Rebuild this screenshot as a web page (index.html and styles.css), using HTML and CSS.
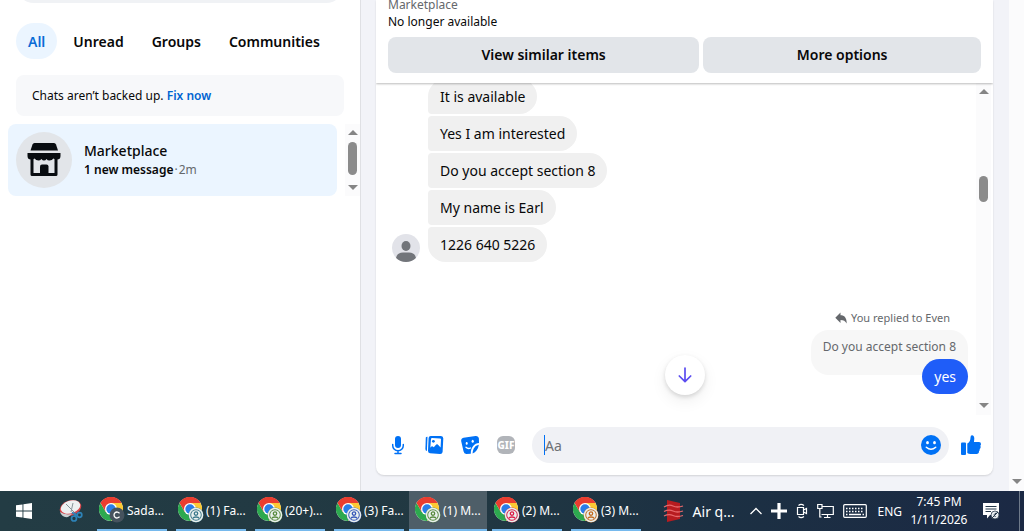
FILE: index.html
```
<!DOCTYPE html>
<html lang="en">
<head>
<meta charset="utf-8">
<title>Messenger</title>
<link rel="stylesheet" href="styles.css">
</head>
<body>
<svg class="defs" aria-hidden="true">
  <defs>
    <symbol id="chrome" viewBox="0 0 24 24">
      <circle cx="12" cy="12" r="12" fill="#fff"/>
      <path d="M12 12 1.6 6A12 12 0 0 1 22.4 6Z" fill="#ea3d2f"/>
      <path d="M12 6H22.4A12 12 0 0 1 12 24L17.2 15Z" fill="#fcc934"/>
      <path d="M6.8 15 1.6 6A12 12 0 0 0 12 24L17.2 15Z" fill="#2da94f"/>
      <path d="M1.6 6 6.8 15 9 8 12 6H22.4A12 12 0 0 0 1.6 6Z" fill="#ea3d2f"/>
      <circle cx="12" cy="12" r="6" fill="#fff"/>
      <circle cx="12" cy="12" r="4.7" fill="#2a7de8"/>
    </symbol>
    <symbol id="person" viewBox="0 0 16 16">
      <circle cx="8" cy="8" r="7.500" fill="currentColor"/>
      <circle cx="8" cy="8" r="6.500" fill="none" stroke="#e9f0ee" stroke-width="1.500"/>
      <circle cx="8" cy="8" r="4.800" fill="#e9f0ee"/>
      <circle cx="8" cy="6.600" r="1.700" fill="none" stroke="currentColor" stroke-width="1.300"/>
      <path d="M4.800 11.500C5.500 9.500 10.500 9.500 11.200 11.500" fill="none" stroke="currentColor" stroke-width="1.300"/>
    </symbol>
    <symbol id="up" viewBox="0 0 10 5"><path d="M5 0 10 5H0Z" fill="#858585"/></symbol>
    <symbol id="down" viewBox="0 0 10 5"><path d="M0 0H10L5 5Z" fill="#858585"/></symbol>
  </defs>
</svg>

<div class="app">
  <aside class="sidebar">
    <input class="search" type="text" aria-label="Search Messenger">
    <nav class="tabs">
      <button class="tab tab-active" type="button">All</button>
      <button class="tab" type="button">Unread</button>
      <button class="tab" type="button">Groups</button>
      <button class="tab" type="button">Communities</button>
    </nav>
    <p class="backup">Chats aren’t backed up. <a href="#">Fix now</a></p>
    <div class="threads">
      <a class="thread" href="#">
        <span class="shop">
          <svg width="36" height="36" viewBox="0 0 36 36">
            <path d="M6.500 2.500Q7 1 8.500 1H28Q29.500 1 30 2.500L32 8.500H4.500Z" fill="#080c10"/>
            <path d="M1.500 11H34.500V14Q34.500 17.500 31 17.500Q28.500 17.500 27.500 16.500Q26 18.500 23.500 18.500Q21.500 18.500 20.500 17Q19.500 18.500 18 18.500Q16.500 18.500 15.500 17Q14 18.500 12.500 18.500Q10 18.500 8.500 16.500Q7.500 17.500 5 17.500Q1.500 17.500 1.500 14Z" fill="#080c10"/>
            <path d="M6 16V32.500H30V16" fill="none" stroke="#080c10" stroke-width="3" stroke-linejoin="round"/>
            <path d="M14 33V24.500Q14 22.500 16 22.500H20.500Q22.500 22.500 22.500 24.500V33Z" fill="#080c10"/>
          </svg>
        </span>
        <span class="thread-text">
          <span class="thread-title">Marketplace</span>
          <span class="thread-sub"><b>1 new message</b><span class="muted"><span class="dot">·</span>2m</span></span>
        </span>
      </a>
      <div class="scroll scroll-threads">
        <svg width="10" height="5"><use href="#up"/></svg>
        <span class="thumb"></span>
        <svg width="10" height="5"><use href="#down"/></svg>
      </div>
    </div>
  </aside>

  <main class="main">
    <section class="chat">
      <header class="listing">
        <div class="listing-name">Marketplace</div>
        <div class="listing-state">No longer available</div>
        <div class="actions">
          <button class="action" type="button">View similar items</button>
          <button class="action" type="button">More options</button>
        </div>
      </header>

      <div class="conversation">
        <div class="messages">
          <div class="incoming">
            <svg class="avatar" width="28" height="28" viewBox="0 0 28 28">
              <defs><clipPath id="round"><circle cx="14" cy="14" r="14"/></clipPath></defs>
              <g clip-path="url(#round)">
                <rect width="28" height="28" fill="#e2e3e9"/>
                <ellipse cx="14" cy="12" rx="4.500" ry="5" fill="#72757a"/>
                <path d="M4 28V24Q5 18.500 11 18.500H17Q23 18.500 24 24V28Z" fill="#72757a"/>
              </g>
            </svg>
            <div class="bubbles">
              <div class="bubble bubble-first">It is available</div>
              <div class="bubble">Yes I am interested</div>
              <div class="bubble">Do you accept section 8</div>
              <div class="bubble">My name is Earl</div>
              <div class="bubble bubble-last">1226 640 5226</div>
            </div>
          </div>
          <div class="outgoing">
            <div class="reply-note">
              <svg width="12" height="12" viewBox="0 0 12 12"><path d="M5.500 .5V3.200C9.500 3.200 11.700 5.800 11.700 11.500C10.300 9 8.600 8 5.500 8V11L.3 5.700Z" fill="#65686c"/></svg>
              You replied to Even
            </div>
            <div class="quote">Do you accept section 8</div>
            <div class="sent">yes</div>
          </div>
        </div>
        <div class="scroll scroll-chat">
          <svg width="10" height="5"><use href="#up"/></svg>
          <span class="thumb"></span>
          <svg width="10" height="5"><use href="#down"/></svg>
        </div>
        <button class="jump" type="button" aria-label="Scroll to bottom">
          <svg width="14" height="16" viewBox="0 0 14 16"><path d="M7 1V14.500M1.300 9 7 14.700 12.700 9" fill="none" stroke="#5b4cf0" stroke-width="1.700" stroke-linecap="round" stroke-linejoin="round"/></svg>
        </button>
      </div>

      <form class="composer">
        <button class="tool" type="button" aria-label="Voice clip">
          <svg width="20" height="20" viewBox="0 0 20 20"><rect x="7" y="1" width="6" height="12" rx="3" fill="#0071f5"/><path d="M4.700 9.500V10.500A5.300 5.300 0 0 0 15.300 10.500V9.500M10 16V18.300M7 18.500H13" fill="none" stroke="#0071f5" stroke-width="1.500" stroke-linecap="round"/></svg>
        </button>
        <button class="tool" type="button" aria-label="Photo">
          <svg width="20" height="20" viewBox="0 0 20 20"><path d="M1.800 2.500Q2.200 1.600 3.500 1.700L2.900 16Q1.500 15.800 1.400 14Z" fill="#0071f5"/><path d="M6.700 1H17Q19.400 1.200 19.300 3.500L18.600 17Q18.300 19.200 16 19.100L6 18.200Q3.900 17.900 4 15.800L4.600 3Q4.800 1 6.700 1Z" fill="#0071f5"/><path d="M7 4Q7.100 3 8 3L16 3.400Q17.100 3.500 17 4.500L16.600 12.500 13.800 9.500Q13 8.800 12.200 9.600L9.800 12.300 8.700 11.400Q8 11 7.400 11.600L6.300 12.700Z" fill="#fff"/><circle cx="9.400" cy="6.300" r="1.400" fill="#0071f5"/></svg>
        </button>
        <button class="tool" type="button" aria-label="Sticker">
          <svg width="20" height="20" viewBox="0 0 20 20"><path d="M3.500 2.700 15.500 1Q18.500 .8 18.900 3.600L19 8C14.500 8.400 10.800 11.800 10.800 18.700L6.300 19Q4 18.800 3.500 16.300L1.200 6.300Q.8 3.400 3.500 2.700Z" fill="#0071f5"/><path d="M18.800 9.800C18 14.500 16 17.200 12.600 18.400C12.800 13.800 15 10.600 18.800 9.800Z" fill="#0071f5"/><ellipse cx="6.700" cy="8.400" rx="1" ry="1.400" fill="#fff"/><ellipse cx="12.700" cy="6.300" rx="1.100" ry="1.500" fill="#fff"/><path d="M6 12.300Q8 14.300 10.500 13" stroke="#fff" stroke-width="1.400" fill="none" stroke-linecap="round"/></svg>
        </button>
        <button class="tool" type="button" aria-label="GIF"><span class="gif">GIF</span></button>
        <div class="field">
          <input class="entry" type="text" placeholder="Aa" aria-label="Message">
          <button class="tool" type="button" aria-label="Emoji">
            <svg width="20" height="20" viewBox="0 0 20 20"><circle cx="10" cy="10" r="10" fill="#0071f5"/><ellipse cx="6.500" cy="7.700" rx="1.400" ry="1.600" fill="#fff"/><ellipse cx="13.500" cy="7.700" rx="1.400" ry="1.600" fill="#fff"/><path d="M5.300 12.300Q10 16.300 14.700 12.300" stroke="#fff" stroke-width="1.500" fill="none" stroke-linecap="round"/></svg>
          </button>
        </div>
        <button class="tool" type="button" aria-label="Like">
          <svg width="20" height="20" viewBox="0 0 20 20"><rect x="0" y="7.500" width="5" height="12.500" rx="1" fill="#0071f5"/><path d="M6.300 8.600C8.700 7.200 9.500 5 9.500 2.500Q9.500 .2 11 .2Q13.300 .5 13.300 3.500L13 7H18Q20 7.100 20 9Q20 10.200 19.300 10.700Q20 11.700 19.500 12.900 19.200 13.600 18.700 13.900 19 15.200 18 16.200 18 18.900 15.500 19H9.500Q7.500 18.900 6.300 18Z" fill="#0071f5"/></svg>
        </button>
      </form>
    </section>
  </main>
  <div class="scroll scroll-page">
    <svg width="10" height="5"><use href="#down"/></svg>
  </div>
</div>

<footer class="taskbar">
  <button class="start" type="button" aria-label="Start">
    <svg width="16" height="16" viewBox="0 0 16 16" fill="#fff"><path d="M0 2.300 6.500 1.400V7.500H0ZM7.400 1.200 16 0V7.500H7.400ZM0 8.400H6.500V14.600L0 13.700ZM7.400 8.400H16V16L7.400 14.800Z"/></svg>
  </button>
  <button class="snip" type="button" aria-label="Snipping Tool">
    <svg width="24" height="24" viewBox="0 0 24 24"><ellipse cx="11.500" cy="9" rx="11" ry="7.500" transform="rotate(-18 11.500 9)" fill="#d8454a"/><ellipse cx="11.500" cy="8" rx="10" ry="6.300" transform="rotate(-18 11.500 8)" fill="#eef0f1"/><path d="M1 13Q3 19 9 18L13 15Q6 16.500 1 13Z" fill="#c9d0d3"/><path d="M7 5 15 13M14 4 12 13" stroke="#889399" fill="none"/><circle cx="15" cy="19.500" r="2.500" fill="none" stroke="#2d83b8" stroke-width="1.700"/><circle cx="20.500" cy="16" r="2.300" fill="none" stroke="#2d83b8" stroke-width="1.700"/><path d="M13 13.500 18 16.500M16 13.500V17.500" stroke="#2d83b8" stroke-width="1.500"/></svg>
  </button>
  <div class="tasks">
    <button class="task" type="button"><svg width="26" height="26" viewBox="0 0 26 26"><use href="#chrome" width="24" height="24"/><circle cx="18" cy="18" r="7.500" fill="#46535e"/><path d="M20.500 16.300A3 3 0 1 0 20.500 19.700" fill="none" stroke="#fff" stroke-width="1.300"/></svg>Sada...</button>
    <button class="task teal" type="button"><svg width="26" height="26" viewBox="0 0 26 26"><use href="#chrome" width="24" height="24"/><use href="#person" x="10" y="10" width="16" height="16"/></svg>(1) Fa...</button>
    <button class="task green" type="button"><svg width="26" height="26" viewBox="0 0 26 26"><use href="#chrome" width="24" height="24"/><use href="#person" x="10" y="10" width="16" height="16"/></svg>(20+)...</button>
    <button class="task blue" type="button"><svg width="26" height="26" viewBox="0 0 26 26"><use href="#chrome" width="24" height="24"/><use href="#person" x="10" y="10" width="16" height="16"/></svg>(3) Fa...</button>
    <button class="task task-active green" type="button"><svg width="26" height="26" viewBox="0 0 26 26"><use href="#chrome" width="24" height="24"/><use href="#person" x="10" y="10" width="16" height="16"/></svg>(1) M...</button>
    <button class="task red" type="button"><svg width="26" height="26" viewBox="0 0 26 26"><use href="#chrome" width="24" height="24"/><use href="#person" x="10" y="10" width="16" height="16"/></svg>(2) M...</button>
    <button class="task orange" type="button"><svg width="26" height="26" viewBox="0 0 26 26"><use href="#chrome" width="24" height="24"/><use href="#person" x="10" y="10" width="16" height="16"/></svg>(3) M...</button>
  </div>
  <div class="tray">
    <button class="air" type="button">
      <svg width="22" height="24" viewBox="0 0 22 24"><path d="M4 1 17 4V20L4 23Z" fill="#b71c20"/><path d="M1 8Q6 5 10 7T20 7M1 12.500Q6 10 10 12T20 12M1 17Q6 14.500 10 16.500T20 16.500" fill="none" stroke="#e8686b" stroke-width="1.300"/></svg>
      Air q...
    </button>
    <div class="status">
      <svg width="12" height="8" viewBox="0 0 12 8"><path d="M.5 7 6 1.500 11.500 7" fill="none" stroke="#fff" stroke-width="1.300"/></svg>
      <svg width="16" height="16" viewBox="0 0 16 16"><path d="M8 0V16M0 8H16" stroke="#fff" stroke-width="3.200"/></svg>
      <svg width="12" height="16" viewBox="0 0 12 16"><path d="M2.500 2.500Q5 .2 8 2.500M2.500 13.500Q5 15.800 8 13.500M1.500 4.500H7.500V11.500H1.500ZM7.500 7 10.500 5.500V10.500L7.500 9" fill="none" stroke="#fff" stroke-width="1.200"/></svg>
      <svg width="17" height="16" viewBox="0 0 17 16"><path d="M5 3.500H16.300V11.500H4.500M10.500 11.500V14.500M7 14.500H13.500M.7 1.500H5V5.500H.7ZM2.800 5.500V14H4.500" fill="none" stroke="#fff" stroke-width="1.200"/></svg>
      <svg width="24" height="14" viewBox="0 0 24 14"><rect x=".7" y=".7" width="22.600" height="12.600" rx="1" fill="none" stroke="#fff" stroke-width="1.200"/><path d="M3 4.500H21M3 7.500H21" stroke="#fff" stroke-width="1.400" stroke-dasharray="1.500 1.500"/><path d="M3 10.500H4.500M6 10.500H18M19.500 10.500H21" stroke="#fff" stroke-width="1.400"/></svg>
    </div>
    <span class="lang">ENG</span>
    <div class="clock"><span>7:45 PM</span><span>1/11/2026</span></div>
    <button class="notice" type="button" aria-label="Notifications">
      <svg width="18" height="18" viewBox="0 0 18 18"><path d="M1 1H17V13H8L5 16.500V13H1Z" fill="#fff"/><path d="M3.500 4.500H14.500M3.500 7H14.500M3.500 9.500H9" stroke="#24384a" stroke-width="1.100"/><circle cx="13" cy="13" r="4" fill="#e8ecef" stroke="#24384a" stroke-width=".8"/><path d="M10 16 16 10M14.500 11Q10.500 12 13.500 15" stroke="#24384a" fill="none"/></svg>
    </button>
    <span class="desktop-edge"></span>
  </div>
</footer>
</body>
</html>
```
FILE: styles.css
```
* { box-sizing: border-box; }
body {
  margin: 0;
  height: 100vh;
  display: flex;
  flex-direction: column;
  overflow: hidden;
  background: #f2f3f8;
  color: #080809;
  font-family: "Segoe UI", "Noto Sans", sans-serif;
  font-size: 14px;
}
button, input { font: inherit; color: inherit; border: 0; padding: 0; background: none; }
a { color: inherit; text-decoration: none; }
svg { display: block; flex: none; }
.defs { position: absolute; width: 0; height: 0; }

.app { flex: 1; min-height: 0; display: flex; }

.sidebar {
  width: 361px;
  flex: none;
  overflow: hidden;
  background: #fff;
  border-right: 1px solid #dfe0e4;
}
.search {
  display: block;
  width: 328px;
  height: 36px;
  margin: -33px 16px 0;
  padding: 0 16px;
  border-radius: 18px;
  background: #f0f2f5;
}
.tabs { display: flex; gap: 4px; margin: 20px 16px 16px; }
.tab { height: 36px; padding: 0 12px; border-radius: 18px; font-weight: 600; }
.tab-active { background: #ebf5ff; color: #0a6bd6; }
.backup {
  margin: 0 16px 8px;
  padding: 12px 16px;
  border-radius: 8px;
  background: #f7f8fa;
  font-size: 12px;
  line-height: 17px;
}
.backup a { color: #0064d1; font-weight: 600; }
.threads { display: flex; align-items: stretch; gap: 8px; margin-left: 8px; }
.thread {
  flex: 1;
  display: flex;
  align-items: center;
  gap: 12px;
  padding: 8px;
  border-radius: 8px;
  background: #ebf5ff;
}
.shop {
  width: 56px;
  height: 56px;
  display: flex;
  align-items: center;
  justify-content: center;
  border-radius: 50%;
  background: #e2e5e9;
}
.thread-text { display: flex; flex-direction: column; }
.thread-title { font-weight: 500; line-height: 20px; }
.thread-sub { font-size: 12px; line-height: 18px; }
.thread-sub b { font-weight: 600; }
.muted { color: #65686c; }
.dot { padding: 0 1px; }

.scroll {
  width: 15px;
  flex: none;
  display: flex;
  flex-direction: column;
  align-items: center;
  padding: 6px 0;
  background: #fbfbfc;
}
.thumb { width: 9px; border-radius: 5px; background: #8b8b8b; }
.scroll-threads .thumb { height: 33px; margin: 7px 0 auto; }
.scroll-chat { margin-right: 2px; padding-bottom: 7px; }
.scroll-chat .thumb { height: 26px; margin: 82px 0 auto; }
.scroll-page { justify-content: flex-end; padding-bottom: 7px; }

.main { flex: 1; min-width: 0; display: flex; padding: 0 16px 16px 15px; }
.chat {
  flex: 1;
  min-width: 0;
  display: flex;
  flex-direction: column;
  overflow: hidden;
  border-radius: 0 0 8px 8px;
  background: #fff;
  box-shadow: 0 1px 2px #0002;
}
.listing {
  z-index: 1;
  padding: 0 12px 10px;
  margin-top: -4px;
  background: #fff;
  box-shadow: 0 1px 2px #0004;
}
.listing-name { font-size: 12px; line-height: 17px; color: #65686c; }
.listing-state { font-size: 12px; line-height: 18px; }
.actions { display: flex; gap: 4px; margin-top: 6px; }
.action {
  flex: 1 1 auto;
  height: 36px;
  padding-bottom: 2px;
  border-radius: 8px;
  background: #e2e5e9;
  font-weight: 600;
}

.conversation { position: relative; flex: 1; min-height: 0; display: flex; }
.messages {
  flex: 1;
  min-width: 0;
  display: flex;
  flex-direction: column;
  justify-content: flex-end;
  gap: 46px;
  overflow: hidden;
  padding: 0 8px 21px 16px;
}
.incoming { display: flex; align-items: flex-end; gap: 8px; }
.bubbles { display: flex; flex-direction: column; align-items: flex-start; gap: 2px; }
.bubble {
  padding: 8px 12px 7px;
  line-height: 20px;
  border-radius: 4px 18px 18px 4px;
  background: #f0f0f0;
}
.bubble-first { border-top-left-radius: 18px; }
.bubble-last { border-bottom-left-radius: 18px; }
.outgoing { display: flex; flex-direction: column; align-items: flex-end; }
.reply-note {
  display: flex;
  align-items: center;
  gap: 4px;
  padding-right: 18px;
  margin-bottom: 3px;
  font-size: 11px;
  line-height: 19px;
  color: #65686c;
}
.quote {
  padding: 9px 12px 20px;
  border-radius: 18px 18px 4px 18px;
  background: #f7f7f7;
  color: #65686c;
  font-size: 12px;
  line-height: 16px;
}
.sent {
  position: relative;
  margin-top: -16px;
  padding: 8px 12px 7px;
  line-height: 20px;
  border-radius: 18px;
  background: #1f5df8;
  color: #fff;
}
.jump {
  position: absolute;
  left: 50%;
  bottom: 20px;
  width: 40px;
  height: 40px;
  margin-left: -20px;
  display: flex;
  align-items: center;
  justify-content: center;
  border-radius: 50%;
  background: #fff;
  box-shadow: 0 2px 4px #0002, 0 6px 16px #0001;
}

.composer { display: flex; align-items: center; gap: 16px; padding: 12px; }
.tool { width: 20px; height: 20px; flex: none; }
.gif {
  display: flex;
  justify-content: center;
  width: 18px;
  margin: 0 1px;
  border-radius: 6px;
  background: #b1b4b9;
  color: #fff;
  font-size: 10px;
  font-weight: 800;
  line-height: 18px;
}
.field {
  flex: 1;
  min-width: 0;
  height: 36px;
  display: flex;
  align-items: center;
  margin-right: -4px;
  padding: 0 8px 0 12px;
  border-radius: 18px;
  background: #f0f1f5;
}
.entry {
  flex: 1;
  min-width: 0;
  height: 20px;
  border-left: 1px solid #0071f5;
  outline: 0;
}
.entry::placeholder { color: #6e7175; opacity: 1; }

.taskbar {
  flex: none;
  height: 40px;
  display: flex;
  background: linear-gradient(90deg, #233c44 0%, #213842 45%, #1c3043 70%, #1b2944 100%);
  color: #fff;
  font-size: 12px;
}
.start { width: 48px; padding: 0 16px; }
.snip { width: 48px; padding: 0 11px; }
.tasks { display: flex; gap: 9px; margin-left: 1px; }
.task {
  width: 70px;
  display: flex;
  align-items: center;
  gap: 2px;
  padding-left: 2px;
  white-space: nowrap;
  border-bottom: 2px solid #76b9ed;
}
.task-active { width: 78px; margin: 0 -4px; padding-left: 6px; background: #4e5e68; }
.teal { color: #39778a; }
.green { color: #55883b; }
.blue { color: #3556b8; }
.red { color: #dd1744; }
.orange { color: #c2691d; }
.task { -webkit-text-fill-color: #fff; }
.tray { flex: 1; display: flex; align-items: center; justify-content: flex-end; }
.air { display: flex; align-items: center; gap: 8px; margin-right: 16px; font-size: 14px; }
.status { display: flex; align-items: center; gap: 9px; }
.lang { margin-left: 10px; }
.clock { width: 74px; display: flex; flex-direction: column; align-items: center; line-height: 18px; }
.notice { margin: 0 19px 0 6px; }
.desktop-edge { align-self: stretch; width: 5px; border-left: 1px solid #6e7a8a; }
```
